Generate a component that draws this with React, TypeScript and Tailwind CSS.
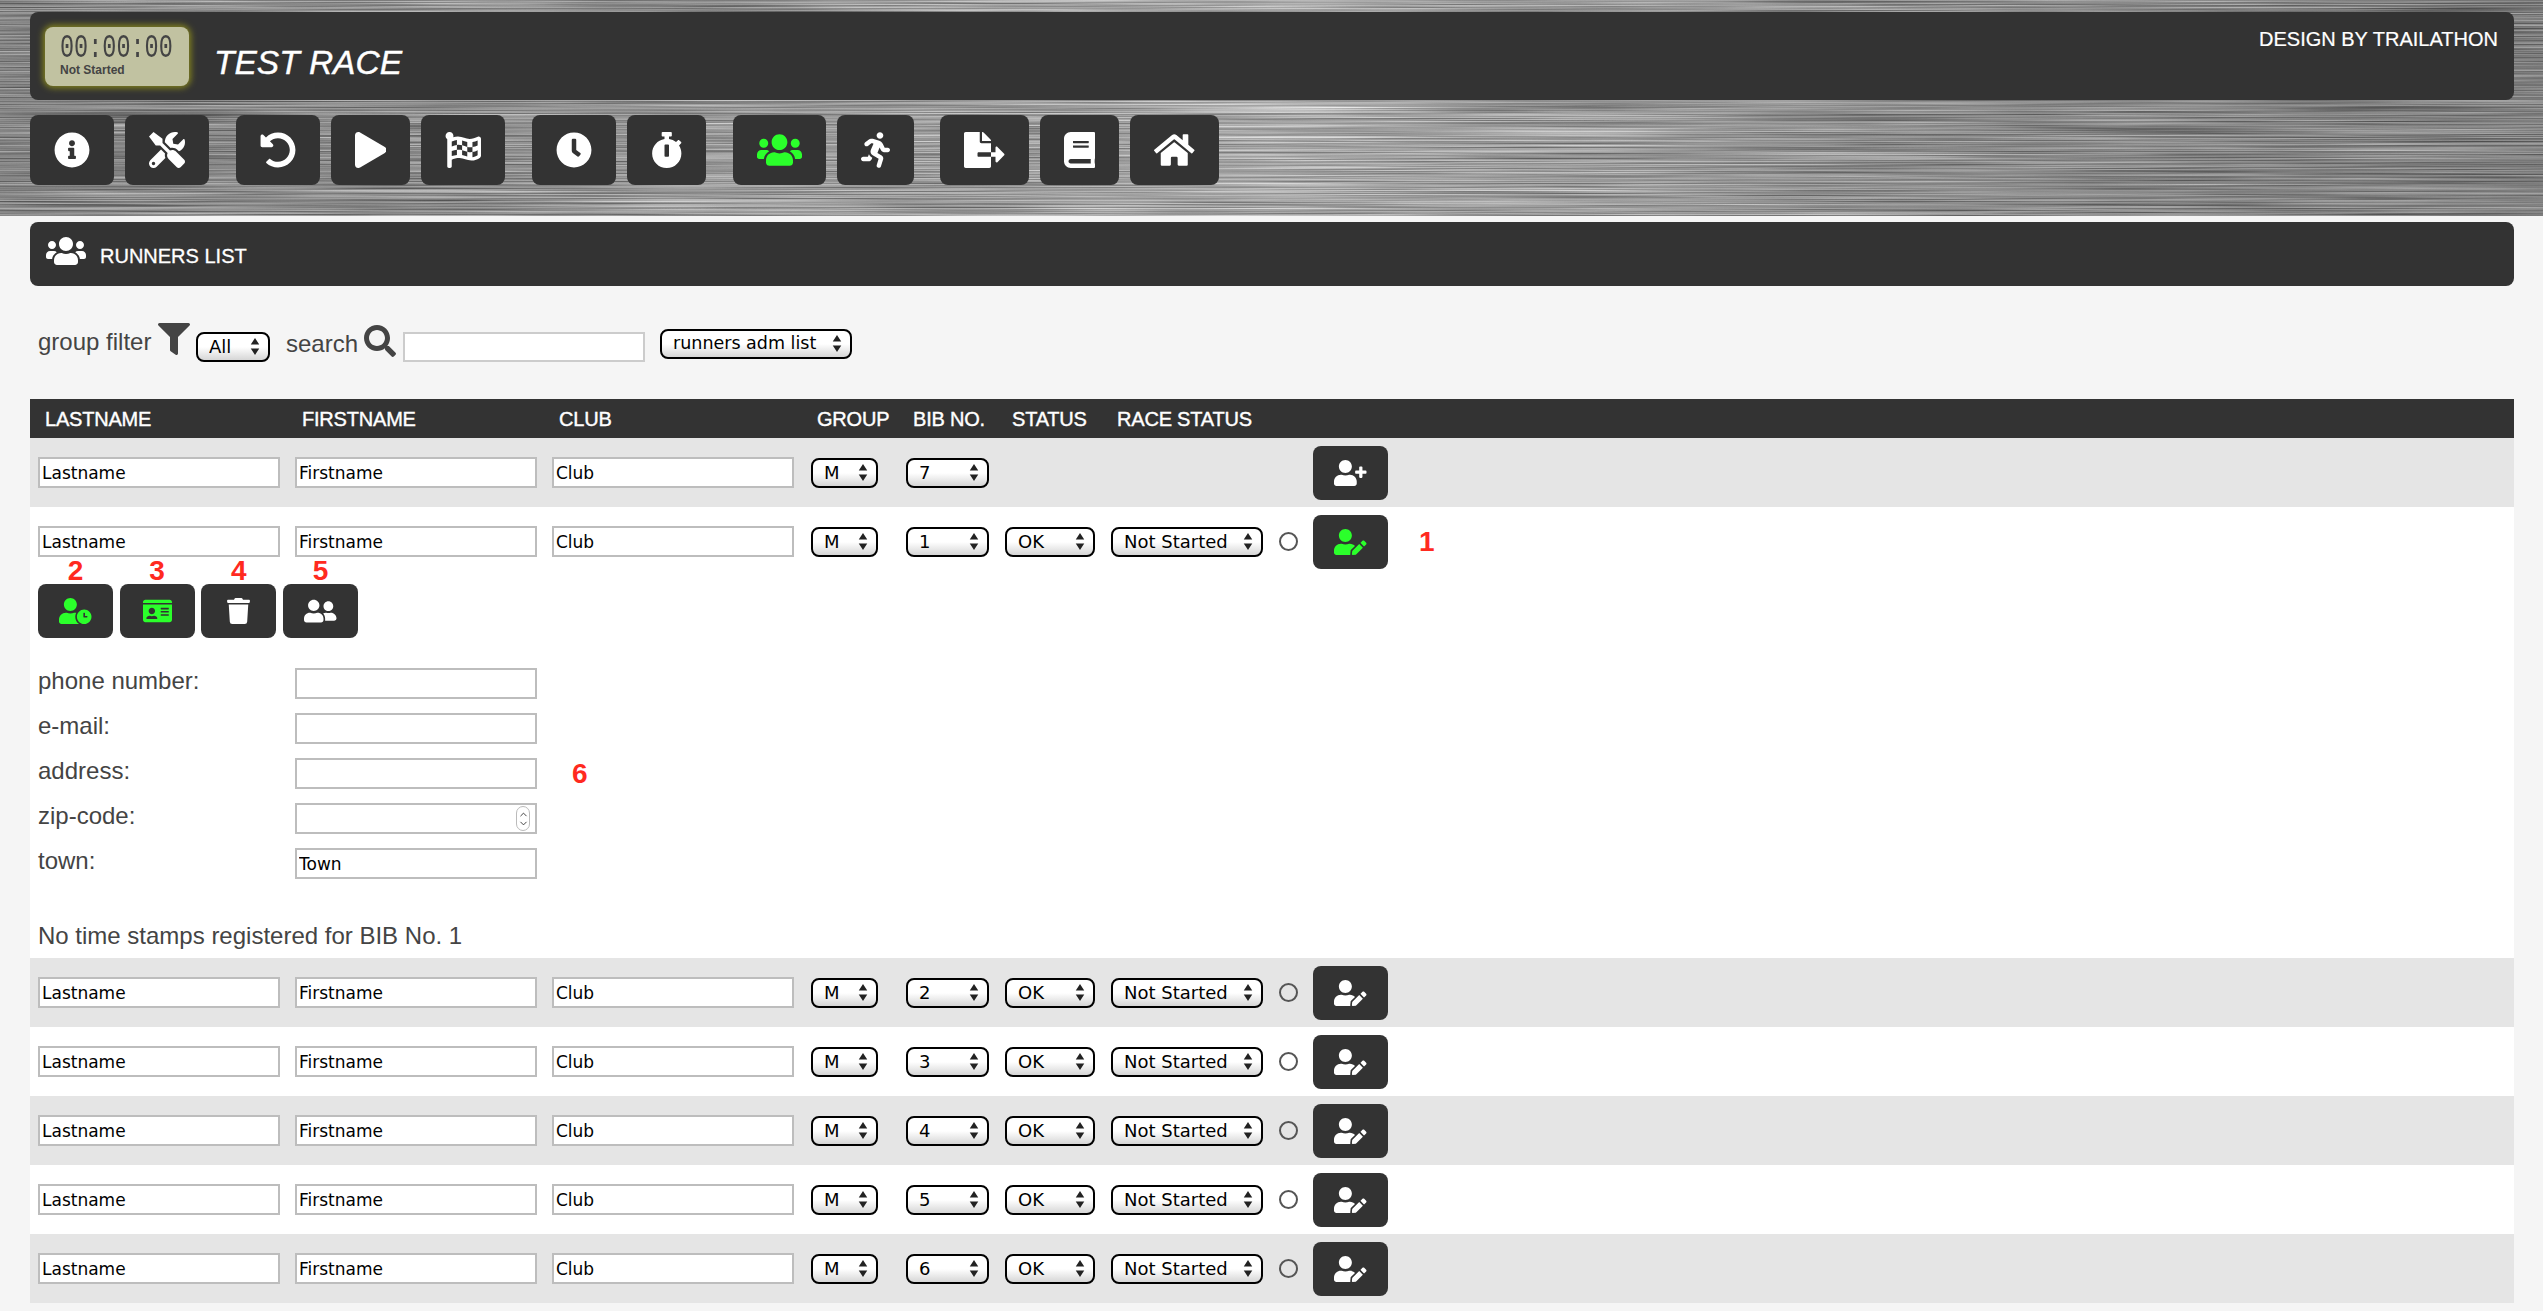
import {
  FaBook,
  FaClock,
  FaFileExport,
  FaFilter,
  FaFlagCheckered,
  FaHome,
  FaIdCard,
  FaInfoCircle,
  FaPlay,
  FaRunning,
  FaSearch,
  FaStopwatch,
  FaTools,
  FaTrash,
  FaUndoAlt,
  FaUserClock,
  FaUserEdit,
  FaUserFriends,
  FaUserPlus,
  FaUsers,
} from 'react-icons/fa'
import { ChevronDown, ChevronUp } from 'lucide-react'
import type { ReactNode } from 'react'

const rowGrid = 'grid grid-cols-[257px_257px_259px_95px_99px_106px_168px_34px_75px_auto] pl-[8px]'
const controlFont = "font-['DejaVu_Sans',sans-serif]"

const toolbar: ReactNode[][] = [
  [
    <FaInfoCircle className="w-[36px] h-[36px]" />,
    <FaTools className="w-[36px] h-[36px]" />,
  ],
  [
    <FaUndoAlt className="w-[36px] h-[36px]" />,
    <FaPlay className="w-[31.5px] h-[36px]" />,
    <FaFlagCheckered className="w-[36px] h-[36px]" />,
  ],
  [
    <FaClock className="w-[36px] h-[36px]" />,
    <FaStopwatch className="w-[31.5px] h-[36px]" />,
  ],
  [
    <FaUsers className="w-[45px] h-[36px] text-[#2bff2b]" />,
    <FaRunning className="w-[29px] h-[36px]" />,
  ],
  [
    <FaFileExport className="w-[40.5px] h-[36px]" />,
    <FaBook className="w-[31.5px] h-[36px]" />,
    <FaHome className="w-[40.5px] h-[36px]" />,
  ],
]

function BrushedMetal() {
  return (
    <svg className="absolute inset-0 w-full h-full" aria-hidden="true">
      <filter id="brushed" x="0" y="0" width="100%" height="100%" colorInterpolationFilters="sRGB">
        <feTurbulence type="fractalNoise" baseFrequency="0.0035 0.7" numOctaves="3" seed="11" />
        <feColorMatrix values="0.7 0 0 0 0.27 0.7 0 0 0 0.27 0.7 0 0 0 0.27 0 0 0 0 1" />
      </filter>
      <rect width="100%" height="100%" filter="url(#brushed)" />
    </svg>
  )
}

function TextBox({ value = '', className = 'w-[242px]' }: { value?: string; className?: string }) {
  return (
    <input
      type="text"
      defaultValue={value}
      className={`${className} h-[31px] bg-white border-2 border-[#bdbdbd] pl-[2px] text-[17px] text-black outline-none ${controlFont}`}
    />
  )
}

function Select({ value, className = '' }: { value: string; className?: string }) {
  return (
    <div className={`relative h-[30px] ${className}`}>
      <select
        defaultValue={value}
        className={`appearance-none block w-full h-full rounded-[8px] border-2 border-black bg-linear-to-b from-white via-white to-[#d6d6d6] pl-[11px] text-[18px] leading-none text-black outline-none ${controlFont}`}
      >
        <option>{value}</option>
      </select>
      <svg viewBox="0 0 10 18" className="absolute right-[10px] top-[6px] w-[10px] h-[17px] pointer-events-none">
        <path d="M5 0L9.5 7H.5zM5 18L.5 11h9z" fill="#222" />
      </svg>
    </div>
  )
}

function RowButton({ green, children }: { green?: boolean; children: ReactNode }) {
  return (
    <button className={`flex items-center justify-center w-[75px] h-[54px] rounded-[8px] bg-[#333333] ${green ? 'text-[#2bff2b]' : 'text-white'}`}>
      {children}
    </button>
  )
}

function Marker({ children, className = '' }: { children: ReactNode; className?: string }) {
  return <span className={`text-[28px] leading-[28px] font-bold text-[#ff2a1f] ${className}`}>{children}</span>
}

function RunnerRow({ bib, gray, green, mark }: { bib: string; gray?: boolean; green?: boolean; mark?: string }) {
  return (
    <div className={`${rowGrid} items-center h-[69px] ${gray ? 'bg-[#e5e5e5]' : 'bg-white'}`}>
      <TextBox value="Lastname" />
      <TextBox value="Firstname" />
      <TextBox value="Club" />
      <Select value="M" className="w-[67px]" />
      <Select value={bib} className="w-[83px]" />
      <Select value="OK" className="w-[90px]" />
      <Select value="Not Started" className="w-[152px]" />
      <input type="radio" className="appearance-none w-[19px] h-[19px] rounded-full border-2 border-[#555555]" />
      <RowButton green={green}>
        <FaUserEdit className="w-[32.5px] h-[26px]" />
      </RowButton>
      {mark && <Marker className="ml-[31px]">{mark}</Marker>}
    </div>
  )
}

function DetailLine({ label, value, children }: { label: string; value?: string; children?: ReactNode }) {
  return (
    <div className="flex items-center h-[31px]">
      <span className="w-[257px] text-[24px] leading-[28px] text-[#444444] -mt-[5px]">{label}</span>
      <div className="relative">
        <TextBox value={value} />
        {label === 'zip-code:' && (
          <div className="absolute right-[7px] top-[3px] flex flex-col items-center justify-center w-[14px] h-[25px] rounded-full border border-[#bbbbbb] text-[#333333]">
            <ChevronUp size={11} strokeWidth={2} className="-mb-[1px]" />
            <ChevronDown size={11} strokeWidth={2} className="-mt-[1px]" />
          </div>
        )}
      </div>
      {children}
    </div>
  )
}

const actions = [
  { mark: '2', green: true, icon: <FaUserClock className="w-[32.5px] h-[26px]" /> },
  { mark: '3', green: true, icon: <FaIdCard className="w-[29px] h-[26px]" /> },
  { mark: '4', green: false, icon: <FaTrash className="w-[23px] h-[26px]" /> },
  { mark: '5', green: false, icon: <FaUserFriends className="w-[32.5px] h-[26px]" /> },
]

export default function App() {
  return (
    <div className="min-h-screen bg-[#f5f5f5] font-['Liberation_Sans',Arial,sans-serif]">
      <header className="relative h-[216px] pt-[12px] pl-[30px] pr-[29px] overflow-hidden">
        <BrushedMetal />
        <div className="absolute inset-0 bg-linear-to-r from-black/15 via-white/10 to-black/20" />

        <div className="relative flex items-start h-[88px] rounded-[8px] bg-[#333333]">
          <div className="ml-[15px] mt-[15px] w-[144px] h-[59px] rounded-[8px] bg-[#c1c2a1] pl-[15px] pt-[9px] shadow-[0_0_6px_2px_#85851e]">
            <div className="h-[23px] origin-center scale-y-[1.4] font-['Liberation_Mono',monospace] text-[23.5px] leading-[23px] text-[#444444]">
              00:00:00
            </div>
            <div className="mt-[4px] text-[12px] leading-[14px] font-bold text-[#444444]">Not Started</div>
          </div>
          <div className="ml-[25px] mt-[31px] text-[33.5px] leading-[40px] italic text-white [-webkit-text-stroke:0.4px_white]">TEST RACE</div>
          <div className="ml-auto mr-[16px] mt-[16px] text-[20px] leading-[23px] text-white [-webkit-text-stroke:0.2px_white]">DESIGN BY TRAILATHON</div>
        </div>

        <nav className="relative flex mt-[15px] gap-[26.5px]">
          {toolbar.map((group, i) => (
            <div key={i} className="flex gap-[11px]">
              {group.map((icon, j) => (
                <button key={j} className="flex items-center justify-center h-[70px] px-[24px] rounded-[8px] bg-[#333333] text-white">
                  {icon}
                </button>
              ))}
            </div>
          ))}
        </nav>
      </header>

      <main className="pl-[30px] pr-[29px] pt-[6px]">
        <div className="flex items-center h-[64px] rounded-[8px] bg-[#333333] pl-[16px] text-white">
          <FaUsers className="w-[40px] h-[32px] -mt-[6px]" />
          <span className="ml-[14px] mt-[3px] text-[20px] leading-[24px] [-webkit-text-stroke:0.3px_white]">RUNNERS LIST</span>
        </div>

        <div className="flex items-start h-[113px] pl-[8px] text-[#444444]">
          <span className="w-[120px] mt-[42px] text-[24px] leading-[28px]">group filter</span>
          <FaFilter className="w-[32px] h-[32px] mt-[37px]" />
          <Select value="All" className="w-[74px] ml-[6px] mt-[46px]" />
          <span className="w-[78px] ml-[16px] mt-[44px] text-[24px] leading-[28px]">search</span>
          <FaSearch className="w-[32px] h-[32px] mt-[39px]" />
          <div className="ml-[7px] mt-[46px]">
            <input type="text" className="block w-[242px] h-[30px] bg-white border-2 border-[#cccccc] outline-none" />
          </div>
          <div className="relative ml-[15px] mt-[43px] w-[192px] h-[29px]">
            <Select value="runners adm list" className="w-[192px] [&_select]:text-[17.5px]" />
          </div>
        </div>

        <div className={`${rowGrid} items-center h-[39px] bg-[#333333] text-white text-[20px] leading-[24px] tracking-[-0.2px] [-webkit-text-stroke:0.4px_white]`}>
          <span className="pl-[7px]">LASTNAME</span>
          <span className="pl-[7px]">FIRSTNAME</span>
          <span className="pl-[7px]">CLUB</span>
          <span className="pl-[6px]">GROUP</span>
          <span className="pl-[7px]">BIB NO.</span>
          <span className="pl-[7px]">STATUS</span>
          <span className="pl-[6px]">RACE STATUS</span>
        </div>

        <div className={`${rowGrid} items-center h-[69px] bg-[#e5e5e5]`}>
          <TextBox value="Lastname" />
          <TextBox value="Firstname" />
          <TextBox value="Club" />
          <Select value="M" className="w-[67px]" />
          <Select value="7" className="w-[83px]" />
          <span />
          <span />
          <span />
          <RowButton>
            <FaUserPlus className="w-[32.5px] h-[26px]" />
          </RowButton>
        </div>

        <RunnerRow bib="1" green mark="1" />

        <section className="bg-white h-[382px] pl-[8px] pt-[8px]">
          <div className="flex gap-[6.67px]">
            {actions.map((a) => (
              <div key={a.mark} className="relative">
                <Marker className="absolute -top-[27px] left-1/2 -translate-x-1/2">{a.mark}</Marker>
                <RowButton green={a.green}>{a.icon}</RowButton>
              </div>
            ))}
          </div>

          <div className="mt-[30px] flex flex-col gap-[14px]">
            <DetailLine label="phone number:" />
            <DetailLine label="e-mail:" />
            <DetailLine label="address:">
              <Marker className="ml-[35px]">6</Marker>
            </DetailLine>
            <DetailLine label="zip-code:" />
            <DetailLine label="town:" value="Town" />
          </div>

          <p className="mt-[43px] text-[24px] leading-[28px] text-[#444444]">No time stamps registered for BIB No. 1</p>
        </section>

        <RunnerRow bib="2" gray />
        <RunnerRow bib="3" />
        <RunnerRow bib="4" gray />
        <RunnerRow bib="5" />
        <RunnerRow bib="6" gray />
      </main>
    </div>
  )
}
